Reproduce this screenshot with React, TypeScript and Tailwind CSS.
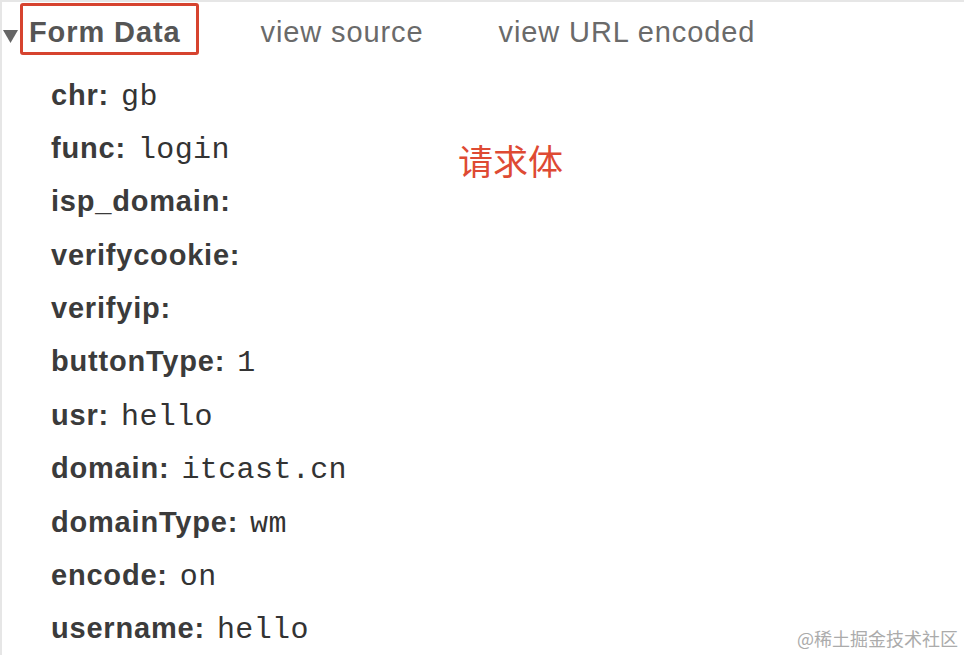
import React from 'react';

const rows: { key: string; value?: string }[] = [
  { key: 'chr:', value: 'gb' },
  { key: 'func:', value: 'login' },
  { key: 'isp_domain:' },
  { key: 'verifycookie:' },
  { key: 'verifyip:' },
  { key: 'buttonType:', value: '1' },
  { key: 'usr:', value: 'hello' },
  { key: 'domain:', value: 'itcast.cn' },
  { key: 'domainType:', value: 'wm' },
  { key: 'encode:', value: 'on' },
  { key: 'username:', value: 'hello' },
];

const sans = { fontFamily: '"Liberation Sans", Arial, sans-serif' };

const App: React.FC = () => {
  return (
    <div
      className="relative w-[964px] h-[655px] overflow-hidden bg-white border-t-2 border-l-2 border-[#e6e6e6]"
      style={sans}
    >
      {/* Section header */}
      <div className="flex h-[55px] items-start">
        <svg className="mt-[28px] ml-[1px] w-[15px] h-[13px]" viewBox="0 0 15 13">
          <polygon points="0,0 15,0 7.5,13" fill="#666" />
        </svg>
        <div className="mt-[1px] ml-[2px] h-[52px] border-[3px] border-[#d6432f] rounded-[3px] pl-[6px] pr-[15px] pt-[12px]">
          <span className="block text-[29px] leading-none font-bold tracking-[0.9px] text-[#555]">Form Data</span>
        </div>
        <span className="ml-[62px] mt-[16px] text-[29px] leading-none tracking-[0.9px] text-[#6a6a6a]">view source</span>
        <span className="ml-[75px] mt-[16px] text-[29px] leading-none tracking-[0.9px] text-[#6a6a6a]">view URL encoded</span>
      </div>

      {/* Form rows */}
      <div className="flex flex-col pl-[49px]">
        {rows.map((r) => (
          <div key={r.key} className="flex items-baseline h-[53.4px] pt-[23.5px]">
            <span className="text-[29px] leading-none font-bold tracking-[0.8px] text-[#3b3b3b]">{r.key}</span>
            {r.value && (
              <span
                className="ml-[12px] text-[30px] leading-none tracking-[0.4px] text-[#333]"
                style={{ fontFamily: '"Liberation Mono", "DejaVu Sans Mono", monospace' }}
              >
                {r.value}
              </span>
            )}
          </div>
        ))}
      </div>

      {/* Annotation */}
      <span
        className="absolute left-[456px] top-[140px] text-[35px] leading-none text-[#de4a33]"
        style={{ fontFamily: '"Noto Sans CJK SC", sans-serif' }}
      >
        请求体
      </span>

      {/* Watermark */}
      <span
        className="absolute right-[6px] bottom-[8px] text-[18px] leading-none text-[#ababab]"
        style={{ fontFamily: '"Noto Sans CJK SC", sans-serif' }}
      >
        @稀土掘金技术社区
      </span>
    </div>
  );
};

export default App;
